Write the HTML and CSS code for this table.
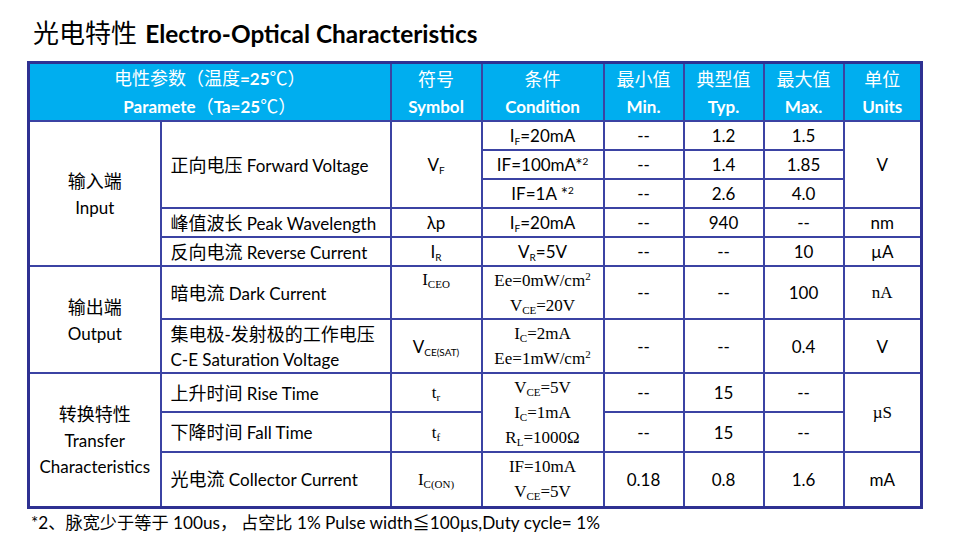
FILE: index.html
```html
<!DOCTYPE html>
<html lang="zh-CN">
<head>
<meta charset="utf-8">
<title>光电特性 Electro-Optical Characteristics</title>
<link rel="stylesheet" href="styles.css">
</head>
<body>
<h1 class="title"><span class="cn">光电特性</span> <span class="en">Electro-Optical Characteristics</span></h1>
<table class="spec">
  <colgroup>
    <col class="c-group"><col class="c-param"><col class="c-sym"><col class="c-cond">
    <col class="c-num"><col class="c-num"><col class="c-num"><col class="c-unit">
  </colgroup>
  <thead>
    <tr class="h-head">
      <th colspan="2"><span class="cn">电性参数（温度</span>=25<span class="cn">℃）</span><br>Paramete<span class="cn">（</span>Ta=25<span class="cn">℃）</span></th>
      <th><span class="cn">符号</span><br>Symbol</th>
      <th><span class="cn">条件</span><br>Condition</th>
      <th><span class="cn">最小值</span><br>Min.</th>
      <th><span class="cn">典型值</span><br>Typ.</th>
      <th><span class="cn">最大值</span><br>Max.</th>
      <th><span class="cn">单位</span><br>Units</th>
    </tr>
  </thead>
  <tbody>
    <tr class="h-29">
      <td rowspan="5" class="group"><span class="cn">输入端</span><br>Input</td>
      <td rowspan="3" class="param"><span class="cn">正向电压</span> Forward Voltage</td>
      <td rowspan="3">V<sub class="s">F</sub></td>
      <td>I<sub class="s">F</sub>=20mA</td>
      <td>--</td><td>1.2</td><td>1.5</td>
      <td rowspan="3">V</td>
    </tr>
    <tr class="h-29">
      <td>IF=100mA*<sup class="p">2</sup></td>
      <td>--</td><td>1.4</td><td>1.85</td>
    </tr>
    <tr class="h-29">
      <td>IF=1A *<sup class="p">2</sup></td>
      <td>--</td><td>2.6</td><td>4.0</td>
    </tr>
    <tr class="h-29">
      <td class="param"><span class="cn">峰值波长</span> Peak Wavelength</td>
      <td>λp</td>
      <td>I<sub class="s">F</sub>=20mA</td>
      <td>--</td><td>940</td><td>--</td>
      <td>nm</td>
    </tr>
    <tr class="h-29">
      <td class="param"><span class="cn">反向电流</span> Reverse Current</td>
      <td>I<sub class="s">R</sub></td>
      <td>V<sub class="s">R</sub>=5V</td>
      <td>--</td><td>--</td><td>10</td>
      <td>µA</td>
    </tr>
    <tr class="h-53">
      <td rowspan="2" class="group"><span class="cn">输出端</span><br>Output</td>
      <td class="param"><span class="cn">暗电流</span> Dark Current</td>
      <td class="tnr top">I<sub class="ts">CEO</sub></td>
      <td class="tnr lines">Ee=0mW/cm<sup class="tp">2</sup><br>V<sub class="ts">CE</sub>=20V</td>
      <td>--</td><td>--</td><td>100</td>
      <td class="tnr">nA</td>
    </tr>
    <tr class="h-54">
      <td class="param lines"><span class="cn">集电极</span>-<span class="cn">发射极的工作电压</span><br>C-E Saturation Voltage</td>
      <td>V<sub class="s">CE(SAT)</sub></td>
      <td class="tnr lines">I<sub class="ts">C</sub>=2mA<br>Ee=1mW/cm<sup class="tp">2</sup></td>
      <td>--</td><td>--</td><td>0.4</td>
      <td>V</td>
    </tr>
    <tr class="h-39">
      <td rowspan="3" class="group"><span class="cn">转换特性</span><br>Transfer<br>Characteristics</td>
      <td class="param"><span class="cn">上升时间</span> Rise Time</td>
      <td class="tnr">t<sub class="ts">r</sub></td>
      <td rowspan="2" class="tnr lines">V<sub class="ts">CE</sub>=5V<br>I<sub class="ts">C</sub>=1mA<br>R<sub class="ts">L</sub>=1000Ω</td>
      <td>--</td><td>15</td><td>--</td>
      <td rowspan="2" class="tnr">µS</td>
    </tr>
    <tr class="h-40">
      <td class="param"><span class="cn">下降时间</span> Fall Time</td>
      <td class="tnr">t<sub class="ts">f</sub></td>
      <td>--</td><td>15</td><td>--</td>
    </tr>
    <tr class="h-55">
      <td class="param"><span class="cn">光电流</span> Collector Current</td>
      <td class="tnr">I<sub class="ts">C(ON)</sub></td>
      <td class="tnr lines">IF=10mA<br>V<sub class="ts">CE</sub>=5V</td>
      <td>0.18</td><td>0.8</td><td>1.6</td>
      <td>mA</td>
    </tr>
  </tbody>
</table>
<p class="note">*2<span class="cn">、脉宽少于等于</span> 100us<span class="cn">， 占空比</span> 1% Pulse width≦100µs,Duty cycle= 1%</p>
</body>
</html>
```

FILE: styles.css
```css
html, body {
  margin: 0;
  padding: 0;
  background: #ffffff;
}

body {
  font-family: Lato, "Noto Sans CJK SC", sans-serif;
  color: #000000;
  width: 957px;
  height: 550px;
  overflow: hidden;
}

.cn {
  font-family: "Noto Sans CJK SC", sans-serif;
  font-weight: 400;
}

.title {
  margin: 0 0 14px 0;
  padding: 16px 0 0 33px;
  height: 31px;
  line-height: 31px;
  font-size: 24px;
  font-weight: normal;
  white-space: nowrap;
}

.title .cn {
  font-size: 26px;
  margin-right: 2px;
}

.title .en {
  font-family: Lato, sans-serif;
  font-weight: 700;
  font-size: 24.4px;
}

.spec {
  margin-left: 27px;
  width: 893px;
  table-layout: fixed;
  border-collapse: collapse;
  border: 3px solid #2e3192;
  font-size: 17px;
}

.c-group { width: 132px; }
.c-param { width: 230px; }
.c-sym { width: 91px; }
.c-cond { width: 122px; }
.c-num { width: 80px; }
.c-unit { width: 78px; }

.spec th,
.spec td {
  border: 2px solid #3b43a3;
  padding: 0;
  text-align: center;
  vertical-align: middle;
  line-height: 25px;
  white-space: nowrap;
}

.spec td .cn {
  font-size: 18px;
}

.spec th {
  background: #00aeef;
  color: #ffffff;
  font-weight: 700;
  font-size: 17px;
  line-height: 27px;
  padding-top: 0;
}

.spec th .cn {
  font-weight: 400;
  font-size: 18px;
}

.h-head { height: 56px; }
.h-29 { height: 29px; }
.h-53 { height: 53px; }
.h-54 { height: 54px; }
.h-39 { height: 39px; }
.h-40 { height: 40px; }
.h-55 { height: 55px; }

.spec td.param {
  text-align: left;
  padding-left: 9px;
}

.spec td.group {
  line-height: 26px;
}

.spec td.lines {
  line-height: 25px;
}

.spec td.top {
  vertical-align: top;
  padding-top: 0;
}

.tnr {
  font-family: "Liberation Serif", "Noto Sans CJK SC", serif;
  font-size: 17px;
}

sub.s {
  font-size: 10px;
  vertical-align: -3px;
  line-height: 0;
}

sub.ts {
  font-size: 11px;
  vertical-align: -3px;
  line-height: 0;
}

sup.p {
  font-size: 10px;
  vertical-align: 6px;
  line-height: 0;
}

sup.tp {
  font-size: 11px;
  vertical-align: 6px;
  line-height: 0;
}

.note {
  margin: 2px 0 0 31px;
  font-size: 17.2px;
  line-height: 22px;
  white-space: nowrap;
}

.note .cn {
  font-size: 17.2px;
}
```
